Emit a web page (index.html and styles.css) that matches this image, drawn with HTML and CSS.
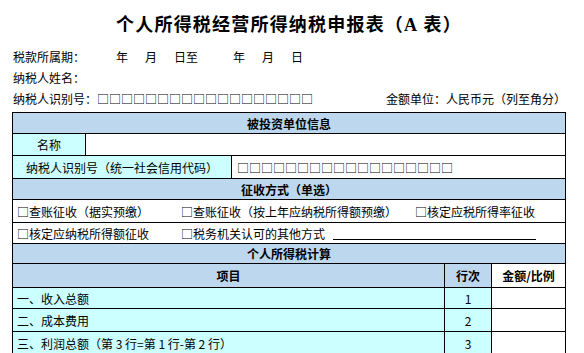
FILE: index.html
```html
<!DOCTYPE html>
<html lang="zh">
<head>
<meta charset="utf-8">
<link rel="stylesheet" href="styles.css">
</head>
<body>
<div class="page">
  <h1 class="title">个人所得税经营所得纳税申报表（<span class="latin">A</span> 表）</h1>
  <div class="meta meta-period">
    <span class="lbl">税款所属期：</span><span class="date">年</span><span class="date">月</span><span class="date">日至</span><span class="date d2">年</span><span class="date">月</span><span class="date">日</span>
  </div>
  <div class="meta meta-name"><span class="lbl">纳税人姓名：</span></div>
  <div class="meta meta-id">
    <span class="lbl">纳税人识别号：</span><span class="boxes">□□□□□□□□□□□□□□□□□□</span>
    <span class="unit">金额单位：人民币元（列至角分）</span>
  </div>

  <div class="sheet">
    <div class="row head h21">被投资单位信息</div>
    <div class="row split-name h22">
      <div class="cell label">名称</div>
      <div class="cell"></div>
    </div>
    <div class="row split-id h23">
      <div class="cell label">纳税人识别号（统一社会信用代码）</div>
      <div class="cell boxcell">□□□□□□□□□□□□□□□□□□</div>
    </div>
    <div class="row head h21">征收方式（单选）</div>
    <div class="row opts h23">
      <span>□查账征收（据实预缴）</span>
      <span>□查账征收（按上年应纳税所得额预缴）</span>
      <span>□核定应税所得率征收</span>
    </div>
    <div class="row opts h21">
      <span>□核定应纳税所得额征收</span>
      <span class="other">□税务机关认可的其他方式<span class="blank"></span></span>
    </div>
    <div class="row head h20">个人所得税计算</div>
    <div class="row calc colhead h24">
      <div class="cell c-item">项目</div>
      <div class="cell c-no">行次</div>
      <div class="cell c-amt">金额/比例</div>
    </div>
    <div class="row calc h21">
      <div class="cell c-item left">一、收入总额</div>
      <div class="cell c-no">1</div>
      <div class="cell c-amt"></div>
    </div>
    <div class="row calc h23">
      <div class="cell c-item left">二、成本费用</div>
      <div class="cell c-no">2</div>
      <div class="cell c-amt"></div>
    </div>
    <div class="row calc h23">
      <div class="cell c-item left">三、利润总额（第 3 行=第 1 行-第 2 行）</div>
      <div class="cell c-no">3</div>
      <div class="cell c-amt"></div>
    </div>
  </div>
</div>
</body>
</html>
```

FILE: styles.css
```css
html, body {
  margin: 0;
  padding: 0;
  background: #ffffff;
}
body {
  font-family: "Noto Sans CJK SC", "Liberation Sans", sans-serif;
  font-size: 12px;
  color: #000;
}
.page {
  width: 554px;
  padding-left: 12px;
}
.title {
  margin: 0;
  height: 46px;
  line-height: 46px;
  text-align: center;
  font-size: 18px;
  font-weight: 700;
  letter-spacing: 1.2px;
}
.title .latin {
  font-family: "Liberation Serif", serif;
}
.meta {
  display: flex;
  align-items: center;
  height: 20px;
  line-height: 20px;
  padding-left: 1px;
}
.meta-period { height: 21px; }
.meta-name { height: 21px; }
.meta-id { height: 22px; margin-bottom: 2px; }
.lbl { white-space: nowrap; }
.meta-period .lbl { width: 103px; }
.date { margin-right: 17px; }
.d2 { margin-left: 18px; }
.unit { margin-left: auto; margin-right: 0; }

.sheet {
  border: 1px solid #000;
  border-bottom: none;
  height: 240px;
  overflow: hidden;
}
.row {
  border-bottom: 1px solid #000;
  box-sizing: border-box;
  display: flex;
  align-items: stretch;
}
.h20 { height: 20px; }
.h21 { height: 21px; }
.h22 { height: 22px; }
.h23 { height: 23px; }
.h24 { height: 24px; }
.head {
  background: #bdd7ee;
  font-weight: 700;
  justify-content: center;
  align-items: center;
}
.cell {
  display: flex;
  align-items: center;
  box-sizing: border-box;
}
.label {
  background: #ccffff;
  border-right: 1px solid #000;
  justify-content: center;
}
.split-name .label { width: 73px; }
.split-id .label { width: 219px; }
.boxcell { padding-left: 5px; }
.opts {
  display: grid;
  grid-template-columns: 164px 234px 1fr;
  align-items: center;
  padding-left: 4px;
  white-space: nowrap;
}
.other {
  grid-column: 2 / 4;
  display: flex;
  align-items: center;
}
.blank {
  display: inline-block;
  width: 203px;
  height: 13px;
  margin-left: 8px;
  border-bottom: 1px solid #000;
}
.calc .cell { justify-content: center; }
.c-item {
  width: 432px;
  background: #ccffff;
  border-right: 1px solid #000;
}
.c-no {
  width: 47px;
  background: #ccffff;
  border-right: 1px solid #000;
}
.c-amt { flex: 1; }
.calc .left { justify-content: flex-start; padding-left: 4px; }
.colhead .cell { background: #bdd7ee; font-weight: 700; }
.colhead .c-amt { background: #ffffff; }
```
